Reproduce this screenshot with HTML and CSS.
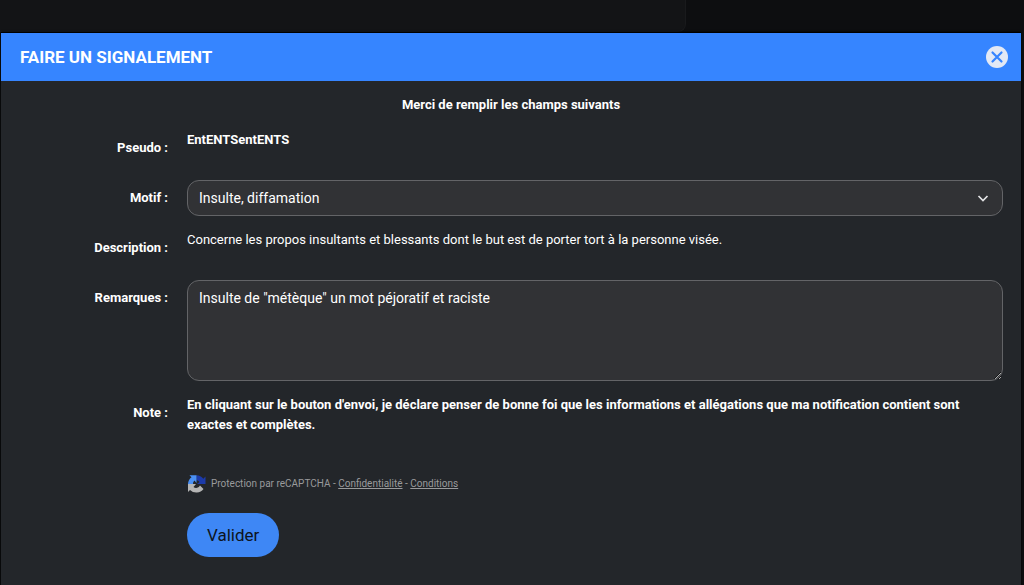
FILE: index.html
```html
<!DOCTYPE html>
<html lang="fr">
<head>
<meta charset="utf-8">
<meta name="viewport" content="width=device-width, initial-scale=1">
<title>Faire un signalement</title>
<link rel="stylesheet" href="styles.css">
</head>
<body class="page">
<div class="page-block"></div>
<main class="modal" role="dialog" aria-labelledby="modal-title">
  <header class="modal-header">
    <h1 class="modal-title" id="modal-title">FAIRE UN SIGNALEMENT</h1>
    <button class="close" type="button" aria-label="Fermer">
      <svg class="close-icon" viewBox="0 0 22 22" aria-hidden="true">
        <circle cx="11" cy="11" r="11" fill="#e3e9f5"/>
        <path d="M6.500 6.500l9 9M15.500 6.500l-9 9" fill="none" stroke="#3685ff" stroke-width="2.200" stroke-linecap="round"/>
      </svg>
    </button>
  </header>
  <form class="modal-body">
    <p class="intro">Merci de remplir les champs suivants</p>
    <div class="row">
      <span class="label">Pseudo :</span>
      <strong class="value">EntENTSentENTS</strong>
    </div>
    <div class="row">
      <label class="label" for="motif">Motif :</label>
      <div class="select-wrap">
        <select class="field select" id="motif">
          <option>Insulte, diffamation</option>
        </select>
        <svg class="chevron" viewBox="0 0 12 12" aria-hidden="true"><path d="M1.500 4L6 8.500 10.500 4" fill="none" stroke="#e4e4e6" stroke-width="1.700"/></svg>
      </div>
    </div>
    <div class="row">
      <span class="label">Description :</span>
      <span class="value">Concerne les propos insultants et blessants dont le but est de porter tort à la personne visée.</span>
    </div>
    <div class="row">
      <label class="label" for="remarques">Remarques :</label>
      <textarea class="field textarea" id="remarques">Insulte de "métèque" un mot péjoratif et raciste</textarea>
    </div>
    <div class="row">
      <span class="label">Note :</span>
      <strong class="value">En cliquant sur le bouton d'envoi, je déclare penser de bonne foi que les informations et allégations que ma notification contient sont exactes et complètes.</strong>
    </div>
    <div class="row actions">
      <div class="captcha">
        <svg class="captcha-logo" viewBox="0 0 18 18" aria-hidden="true">
          <path d="M18 9V1.500l-2.200 2.200A8.700 8.700 0 0 0 9 .3V5a4.300 4.300 0 0 1 3 2L9.500 9z" fill="#1c3aa9"/>
          <path d="M9 .3H2l2 2A9 9 0 0 0 .5 9h5A4 4 0 0 1 7 5.500L9 8z" fill="#4a90f5"/>
          <path d="M.5 9v8l2-2a9 9 0 0 0 13.500-1l-3.500-3.500A4.300 4.300 0 0 1 6 12l2.500-3z" fill="#b4b4b4"/>
        </svg>
        <p class="captcha-text">Protection par reCAPTCHA - <a href="#confidentialite">Confidentialité</a> - <a href="#conditions">Conditions</a></p>
      </div>
      <button class="submit" type="submit">Valider</button>
    </div>
  </form>
</main>
</body>
</html>
```
FILE: styles.css
```css
* { box-sizing: border-box; }

.page {
  margin: 0;
  min-height: 100vh;
  display: flex;
  flex-direction: column;
  background: #0d0e10;
  color: #fff;
  font: 13px/20px Roboto, "Liberation Sans", sans-serif;
}

.page-block {
  width: 67%;
  height: 32px;
  border: solid #191a1c;
  border-width: 0 1px 1px 0;
  border-bottom-right-radius: 8px;
  background: #131416;
}

.modal {
  flex: 1;
  margin: 0 3px 0 1px;
  border-top: 1px solid #000;
  background: #23262a;
  box-shadow: 0 0 2px #000;
}

.modal-header {
  display: flex;
  align-items: center;
  justify-content: space-between;
  height: 48px;
  padding: 0 13px 0 19px;
  background: #3685ff;
}

.modal-title {
  margin: 0;
  font-size: 17px;
  line-height: 20px;
  font-weight: 700;
}

.close {
  display: flex;
  padding: 0;
  border: 0;
  background: none;
  cursor: pointer;
}

.close-icon { width: 22px; height: 22px; }

.modal-body { padding: 14px 18px 28px; }

.intro {
  margin: 0 0 15px;
  text-align: center;
  font-weight: 700;
}

.row {
  display: grid;
  grid-template-columns: 149px minmax(0, 1fr);
  column-gap: 19px;
  align-items: start;
  min-height: 36px;
  margin-bottom: 14px;
}

.label {
  padding-top: 8px;
  text-align: right;
  font-weight: 700;
}

.field {
  display: block;
  width: 100%;
  border: 1px solid #636467;
  border-radius: 12px;
  background: #313235;
  color: #fff;
  font: 14px/20px Roboto, "Liberation Sans", sans-serif;
}

.select-wrap { position: relative; }

.select {
  appearance: none;
  height: 36px;
  padding: 0 36px 0 11px;
}

.chevron {
  position: absolute;
  top: 12px;
  right: 14px;
  width: 12px;
  height: 12px;
  pointer-events: none;
}

.textarea {
  height: 101px;
  padding: 7px 11px;
  resize: vertical;
}

.actions { padding-top: 25px; }

.actions > * { grid-column: 2; }

.captcha {
  display: flex;
  align-items: center;
  gap: 5px;
  margin-bottom: 19px;
}

.captcha-logo { width: 19px; height: 18px; }

.captcha-text {
  margin: 0;
  color: #999a9c;
  font-size: 10px;
}

.captcha-text a { color: inherit; }

.submit {
  justify-self: start;
  height: 44px;
  padding: 0 20px;
  border: 0;
  border-radius: 22px;
  background: #3e87f5;
  color: #0d1420;
  font: 17px/20px Roboto, "Liberation Sans", sans-serif;
  cursor: pointer;
}
```
